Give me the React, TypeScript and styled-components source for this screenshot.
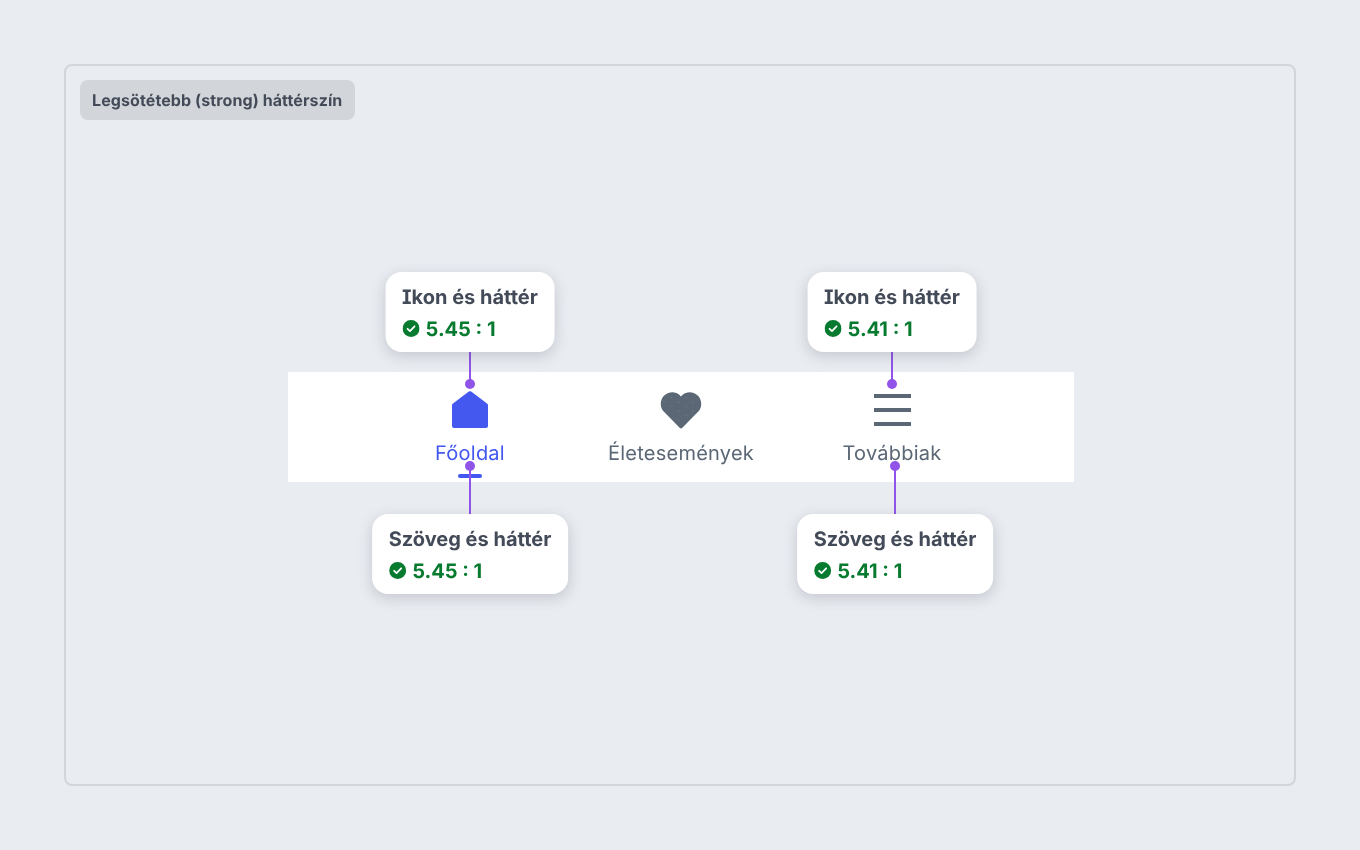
import React from 'react'
import styled, { createGlobalStyle } from 'styled-components'

const Global = createGlobalStyle`
  html, body {
    margin: 0;
    padding: 0;
    background: #e9ecf1;
    font-family: Inter, "Noto Sans", sans-serif;
    font-feature-settings: "cv08" 1;
    text-rendering: geometricPrecision;
    -webkit-font-smoothing: antialiased;
  }
`

const Page = styled.div`
  box-sizing: border-box;
  width: 1360px;
  height: 850px;
  padding: 64px;
  will-change: transform;
`

const Frame = styled.section`
  position: relative;
  box-sizing: border-box;
  width: 1232px;
  height: 722px;
  padding: 14px;
  border: 2px solid #d2d5da;
  border-radius: 8px;
  display: flex;
  flex-direction: column;
`

const Label = styled.div`
  align-self: flex-start;
  box-sizing: border-box;
  height: 40px;
  padding: 0 13px 0 12px;
  display: flex;
  align-items: center;
  border-radius: 8px;
  background: #d2d5da;
  color: #434a58;
  font-size: 16px;
  font-weight: 700;
  letter-spacing: 0.1px;
`

const Stage = styled.div`
  flex: 1;
  display: flex;
  justify-content: center;
  padding: 252px 0 0 2px;
`

const Nav = styled.nav`
  position: relative;
  width: 786px;
  height: 110px;
  background: #fff;
  display: flex;
  justify-content: center;
`

const Tab = styled.div<{ $active?: boolean }>`
  position: relative;
  width: 211px;
  display: flex;
  flex-direction: column;
  align-items: center;
  color: ${p => (p.$active ? '#4458f0' : '#5b6775')};
  font-size: 20px;
  line-height: 24px;
  letter-spacing: 0.25px;
`

const IconSlot = styled.div`
  height: 44px;
  margin-top: 19px;
  margin-bottom: 6px;
  display: flex;
  align-items: flex-start;
  justify-content: center;
`

const Indicator = styled.div`
  position: absolute;
  left: 50%;
  bottom: 4px;
  width: 24px;
  height: 4px;
  margin-left: -12px;
  border-radius: 2px;
  background: #4458f0;
`

const Callout = styled.div<{ $x: number; $below?: boolean }>`
  position: absolute;
  left: ${p => p.$x}px;
  ${p => (p.$below ? 'top: 142px;' : 'top: -100px;')}
  transform: translateX(-50%);
  box-sizing: border-box;
  height: 80px;
  padding: 13px 16.5px 0;
  border-radius: 16px;
  background: #fff;
  box-shadow: 0 4px 14px rgba(67, 74, 88, 0.22);
  white-space: nowrap;
`

const CalloutTitle = styled.div`
  color: #434a58;
  font-size: 20px;
  font-weight: 700;
  line-height: 24px;
`

const Ratio = styled.div`
  margin-top: 8px;
  display: flex;
  align-items: center;
  gap: 6.5px;
  color: #067a2e;
  font-size: 20px;
  font-weight: 700;
  line-height: 24px;
`

const CheckSvg = styled.svg`
  margin-top: -2px;
`

const Wire = styled.div<{ $x: number; $top: number; $height: number }>`
  position: absolute;
  left: ${p => p.$x - 1}px;
  top: ${p => p.$top}px;
  width: 2px;
  height: ${p => p.$height}px;
  background: #9055e8;
`

const Dot = styled.div<{ $x: number; $y: number }>`
  position: absolute;
  left: ${p => p.$x - 5}px;
  top: ${p => p.$y - 5}px;
  width: 10px;
  height: 10px;
  border-radius: 50%;
  background: #9055e8;
`

const CheckIcon = () => (
  <CheckSvg width="17" height="17" viewBox="0 0 17 17">
    <circle cx="8.5" cy="8.5" r="8.5" fill="#067a2e" />
    <path d="M5 8.800l2.400 2.300L12 6.300" fill="none" stroke="#fff" strokeWidth="1.8" strokeLinecap="round" strokeLinejoin="round" />
  </CheckSvg>
)

const HomeIcon = () => (
  <svg width="36" height="38" viewBox="0 0 36 38">
    <path d="M16.800.6a2 2 0 0 1 2.400 0L35 12.400a2.400 2.400 0 0 1 1 2V35a2 2 0 0 1-2 2H2a2 2 0 0 1-2-2V14.400a2.400 2.400 0 0 1 1-2z" fill="#4458f0" />
  </svg>
)

const HeartIcon = () => (
  <svg width="42" height="38" viewBox="0 0 42 38">
    <defs>
      <pattern id="heart-dots" width="14.6" height="9" patternUnits="userSpaceOnUse">
        <circle cx="3.500" cy="2" r="0.6" fill="#7b8693" />
        <circle cx="10.800" cy="6.500" r="0.6" fill="#7b8693" />
      </pattern>
    </defs>
    <g transform="translate(0.5 0)">
      <path d="M20.500 37.500a1.600 1.600 0 0 1-1.100-.5L3.200 20.600C-.8 16.400-.6 9.500 3.200 5.100 7.400.4 14.700-.3 19.100 4l1.400 1.500L21.900 4c4.400-4.300 11.700-3.600 15.900 1.100 3.800 4.400 4 11.300 0 15.500L21.600 37a1.600 1.600 0 0 1-1.100.5z" fill="#5b6775" />
      <path d="M20.500 32L5 18C1.500 14-.5 10 4.500 6.500 9 2 15 2 19 6l1.500 1.500L22 6c4-4 10-4 14.500.5 5 3.500 3 7.500-.5 11.500z" fill="url(#heart-dots)" />
    </g>
  </svg>
)

const MenuIcon = () => (
  <svg width="37" height="38" viewBox="0 0 37 38">
    <rect y="3" width="37" height="4" fill="#5b6775" />
    <rect y="17" width="37" height="4" fill="#5b6775" />
    <rect y="31" width="37" height="4" fill="#5b6775" />
  </svg>
)

export default function App() {
  return (
    <Page>
      <Global />
      <Frame>
        <Label>Legsötétebb (strong) háttérszín</Label>
        <Stage>
          <Nav>
            <Tab $active>
              <IconSlot><HomeIcon /></IconSlot>
              <span>Főoldal</span>
              <Indicator />
            </Tab>
            <Tab>
              <IconSlot><HeartIcon /></IconSlot>
              <span>Életesemények</span>
            </Tab>
            <Tab>
              <IconSlot><MenuIcon /></IconSlot>
              <span>Továbbiak</span>
            </Tab>

            <Wire $x={182} $top={-20} $height={32} />
            <Dot $x={182} $y={12} />
            <Wire $x={604} $top={-20} $height={32} />
            <Dot $x={604} $y={12} />
            <Wire $x={182} $top={94} $height={48} />
            <Dot $x={182} $y={94} />
            <Wire $x={607} $top={94} $height={48} />
            <Dot $x={607} $y={94} />

            <Callout $x={182}>
              <CalloutTitle>Ikon és háttér</CalloutTitle>
              <Ratio><CheckIcon />5.45 : 1</Ratio>
            </Callout>
            <Callout $x={604}>
              <CalloutTitle>Ikon és háttér</CalloutTitle>
              <Ratio><CheckIcon />5.41 : 1</Ratio>
            </Callout>
            <Callout $x={182} $below>
              <CalloutTitle>Szöveg és háttér</CalloutTitle>
              <Ratio><CheckIcon />5.45 : 1</Ratio>
            </Callout>
            <Callout $x={607} $below>
              <CalloutTitle>Szöveg és háttér</CalloutTitle>
              <Ratio><CheckIcon />5.41 : 1</Ratio>
            </Callout>
          </Nav>
        </Stage>
      </Frame>
    </Page>
  )
}
